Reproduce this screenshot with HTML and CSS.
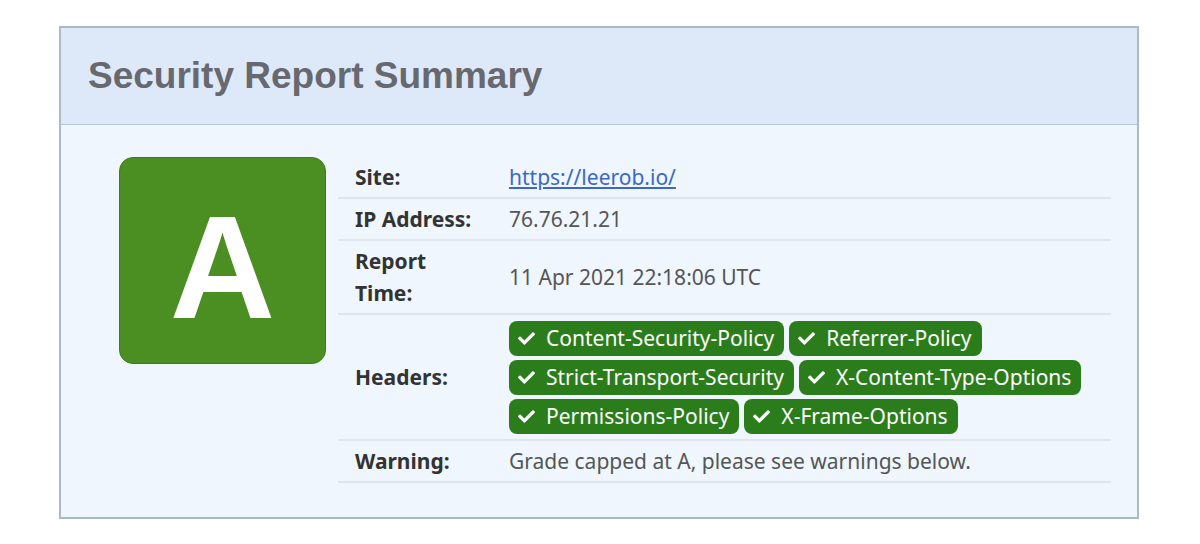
FILE: index.html
```html
<!DOCTYPE html>
<html>
<head>
<meta charset="utf-8">
<link rel="stylesheet" href="styles.css">
</head>
<body>
<div class="panel">
  <div class="panel-head"><h1 class="title">Security Report Summary</h1></div>
  <div class="panel-body">
    <div class="grade"><span>A</span></div>
    <table class="info">
      <tr><th>Site:</th><td><a class="link" href="#">https://leerob.io/</a></td></tr>
      <tr><th>IP Address:</th><td>76.76.21.21</td></tr>
      <tr><th>Report<br>Time:</th><td>11 Apr 2021 22:18:06 UTC</td></tr>
      <tr><th>Headers:</th><td>
        <div class="badges">
          <span class="badge"><svg viewBox="0 0 512 512"><path d="M173.9 439.4l-166.4-166.4c-10-10-10-26.2 0-36.2l36.2-36.2c10-10 26.2-10 36.2 0L192 312.7 432.1 72.6c10-10 26.2-10 36.2 0l36.2 36.2c10 10 10 26.2 0 36.2l-294.4 294.4c-10 10-26.2 10-36.2 0z"/></svg>Content-Security-Policy</span>
          <span class="badge"><svg viewBox="0 0 512 512"><path d="M173.9 439.4l-166.4-166.4c-10-10-10-26.2 0-36.2l36.2-36.2c10-10 26.2-10 36.2 0L192 312.7 432.1 72.6c10-10 26.2-10 36.2 0l36.2 36.2c10 10 10 26.2 0 36.2l-294.4 294.4c-10 10-26.2 10-36.2 0z"/></svg>Referrer-Policy</span>
          <span class="badge"><svg viewBox="0 0 512 512"><path d="M173.9 439.4l-166.4-166.4c-10-10-10-26.2 0-36.2l36.2-36.2c10-10 26.2-10 36.2 0L192 312.7 432.1 72.6c10-10 26.2-10 36.2 0l36.2 36.2c10 10 10 26.2 0 36.2l-294.4 294.4c-10 10-26.2 10-36.2 0z"/></svg>Strict-Transport-Security</span>
          <span class="badge"><svg viewBox="0 0 512 512"><path d="M173.9 439.4l-166.4-166.4c-10-10-10-26.2 0-36.2l36.2-36.2c10-10 26.2-10 36.2 0L192 312.7 432.1 72.6c10-10 26.2-10 36.2 0l36.2 36.2c10 10 10 26.2 0 36.2l-294.4 294.4c-10 10-26.2 10-36.2 0z"/></svg>X-Content-Type-Options</span>
          <span class="badge"><svg viewBox="0 0 512 512"><path d="M173.9 439.4l-166.4-166.4c-10-10-10-26.2 0-36.2l36.2-36.2c10-10 26.2-10 36.2 0L192 312.7 432.1 72.6c10-10 26.2-10 36.2 0l36.2 36.2c10 10 10 26.2 0 36.2l-294.4 294.4c-10 10-26.2 10-36.2 0z"/></svg>Permissions-Policy</span>
          <span class="badge"><svg viewBox="0 0 512 512"><path d="M173.9 439.4l-166.4-166.4c-10-10-10-26.2 0-36.2l36.2-36.2c10-10 26.2-10 36.2 0L192 312.7 432.1 72.6c10-10 26.2-10 36.2 0l36.2 36.2c10 10 10 26.2 0 36.2l-294.4 294.4c-10 10-26.2 10-36.2 0z"/></svg>X-Frame-Options</span>
        </div>
      </td></tr>
      <tr><th>Warning:</th><td>Grade capped at A, please see warnings below.</td></tr>
    </table>
  </div>
</div>
</body>
</html>
```
FILE: styles.css
```css
html, body {
  margin: 0;
  padding: 0;
  background: #ffffff;
}
body {
  padding: 26px 0 0 59px;
  font-family: "Noto Sans", "Open Sans", sans-serif;
}
.panel {
  width: 1076px;
  border: 2px solid #a9bcc4;
  background: #eff6fd;
}
.panel-head {
  background: #dde9f9;
  border-bottom: 1px solid #b9c8d0;
  height: 96px;
  display: flex;
  align-items: center;
  padding-left: 27px;
}
.title {
  margin: 0;
  font-family: "Liberation Sans", Arial, sans-serif;
  font-weight: bold;
  font-size: 37px;
  color: #68686f;
}
.panel-body {
  display: flex;
  align-items: flex-start;
  padding: 32px 26px 34px 58px;
}
.grade {
  width: 205px;
  height: 205px;
  flex: none;
  background: #4b8e22;
  border: 1px solid #3f7a1b;
  border-radius: 14px;
  display: flex;
  align-items: center;
  justify-content: center;
  margin-right: 12px;
}
.grade span {
  font-family: "Liberation Sans", Arial, sans-serif;
  font-weight: bold;
  font-size: 146px;
  line-height: 1;
  color: #ffffff;
  margin-top: 14px;
}
.info {
  flex: 1;
  border-collapse: collapse;
  font-size: 21px;
  line-height: 32px;
}
.info tr {
  border-bottom: 2px solid #dfe5ea;
}
.info th {
  text-align: left;
  font-weight: bold;
  color: #333333;
  width: 137px;
  padding: 4px 17px 4px 17px;
  vertical-align: middle;
}
.info td {
  color: #555555;
  padding: 4px 0 4px 0;
  vertical-align: middle;
}
.link {
  color: #3b68c6;
  text-decoration: underline;
}
.badges {
  display: flex;
  flex-wrap: wrap;
  gap: 4px 5px;
  width: 600px;
  padding: 2px 0 1px;
}
.badge {
  display: inline-flex;
  align-items: center;
  height: 35px;
  padding: 0 10px 0 9px;
  background: #2b7d1b;
  color: #ffffff;
  border-radius: 8px;
  font-size: 21px;
  line-height: 35px;
  white-space: nowrap;
}
.badge svg {
  width: 17px;
  height: 17px;
  fill: #ffffff;
  margin-right: 11px;
}
```
